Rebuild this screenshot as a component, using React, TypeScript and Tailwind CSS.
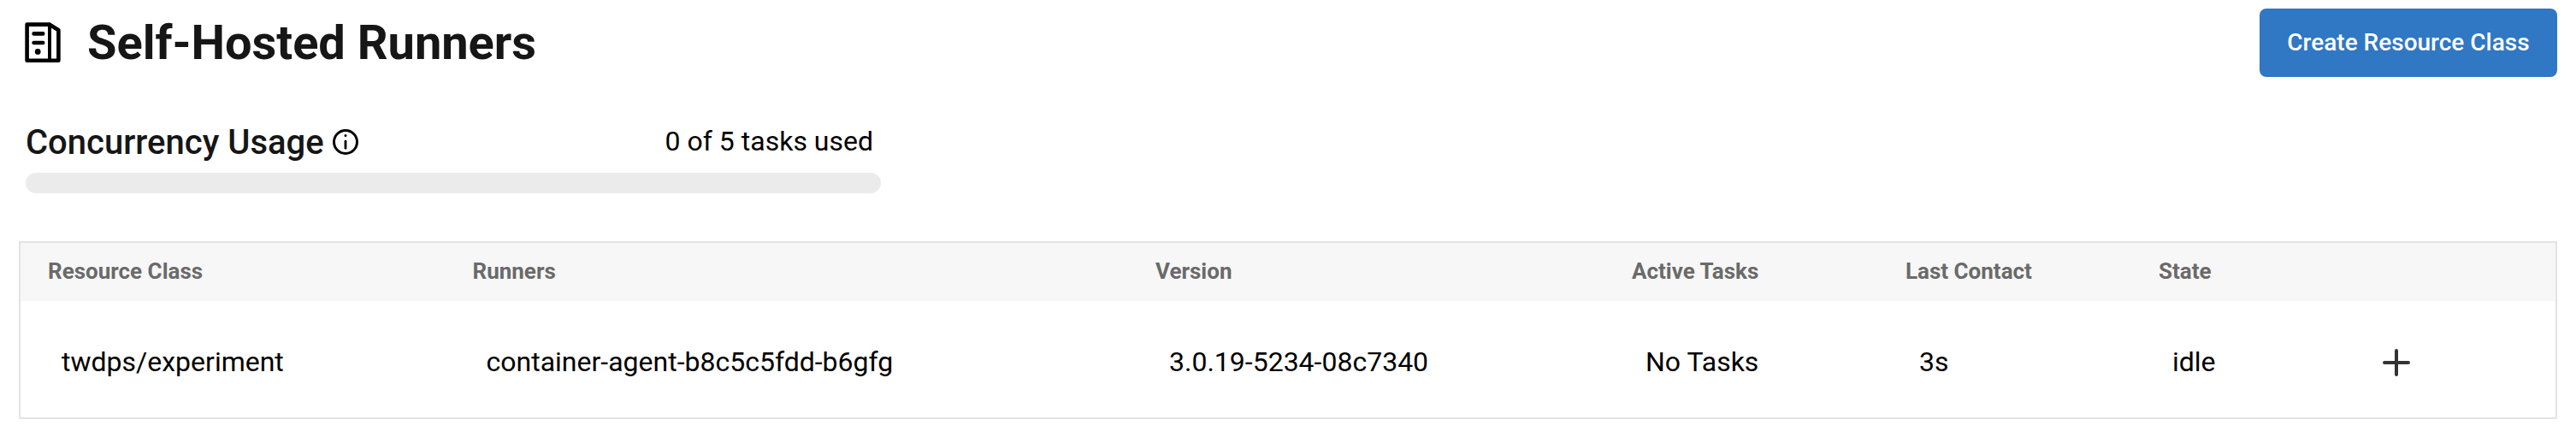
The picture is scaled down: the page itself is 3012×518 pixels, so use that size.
const GRID = "grid grid-cols-[496.5px_798.5px_557px_320px_296px_240px_1fr] pl-8 items-center";

const columns = ["Resource Class", "Runners", "Version", "Active Tasks", "Last Contact", "State"];
const rows = [["twdps/experiment", "container-agent-b8c5c5fdd-b6gfg", "3.0.19-5234-08c7340", "No Tasks", "3s", "idle"]];

function ServerIcon() {
  return (
    <svg className="w-[48px] h-[56px] shrink-0" viewBox="26 22 48 56" fill="none" stroke="#000" strokeWidth="4.6" strokeLinecap="round" strokeLinejoin="round">
      <path d="M31.6 28.6H58L68.4 35.2V70.7H31.6Z" />
      <path d="M58 28.6V70.7" strokeWidth="4" />
      <path d="M39.6 39.4H50.2M39.6 50H50.2" />
      <circle cx="44.2" cy="60.4" r="3.4" fill="#000" stroke="none" />
    </svg>
  );
}

function InfoIcon() {
  return (
    <svg className="w-8 h-8 shrink-0" viewBox="0 0 32 32" fill="none" stroke="#000" strokeWidth="3" strokeLinecap="round">
      <circle cx="16" cy="16" r="13.5" />
      <path d="M16 15.2V23.3" strokeWidth="2.8" />
      <circle cx="16" cy="8.5" r="1.5" fill="#000" stroke="none" />
    </svg>
  );
}

export default function App() {
  return (
    <div className="w-[3012px] h-[518px] bg-white overflow-hidden font-[Roboto,sans-serif] text-black">
      <header className="flex items-center justify-between h-[80px] mt-[10px] pl-[26px] pr-[22px]">
        <div className="flex items-center">
          <ServerIcon />
          <h1 className="ml-[28px] text-[56px] leading-[64px] font-bold tracking-[-0.04px] text-[#161616]">Self-Hosted Runners</h1>
        </div>
        <button className="w-[348px] h-[80px] rounded-lg bg-[#3077c4] text-white text-[28px] leading-8 font-medium">Create Resource Class</button>
      </header>
      <section className="mt-[52px] ml-[30px] w-[1000px]">
        <div className="flex items-center justify-between h-[48px] pr-[9px]">
          <div className="flex items-center">
            <h2 className="pt-[2px] text-[40px] leading-[48px] font-medium text-[#161616]">Concurrency Usage</h2>
            <span className="ml-[9.4px]"><InfoIcon /></span>
          </div>
          <span className="pb-[2px] text-[32px] leading-[40px]">0 of 5 tasks used</span>
        </div>
        <div className="mt-[12px] h-6 rounded-full bg-[#ebebeb]" />
      </section>
      <section className="mt-[56px] ml-[22px] w-[2968px] h-[208px] border-2 border-[#e3e3e3]">
        <div className={`${GRID} h-[68px] pb-[2px] bg-[#f7f7f7]`}>
          {columns.map((c) => (
            <div key={c} className="text-[26px] leading-8 font-bold text-[#6a6a6a]">{c}</div>
          ))}
        </div>
        {rows.map((r) => (
          <div key={r[0]} className={`${GRID} h-[136px] pt-2 text-[32px] leading-10`}>
            {r.map((v) => (
              <div key={v} className="pl-4 pb-[2px]">{v}</div>
            ))}
            <svg className="w-9 h-9 ml-[20px]" viewBox="0 0 36 36" stroke="#333" strokeWidth="4" strokeLinecap="round">
              <path d="M18 4V32M4 18H32" />
            </svg>
          </div>
        ))}
      </section>
    </div>
  );
}
